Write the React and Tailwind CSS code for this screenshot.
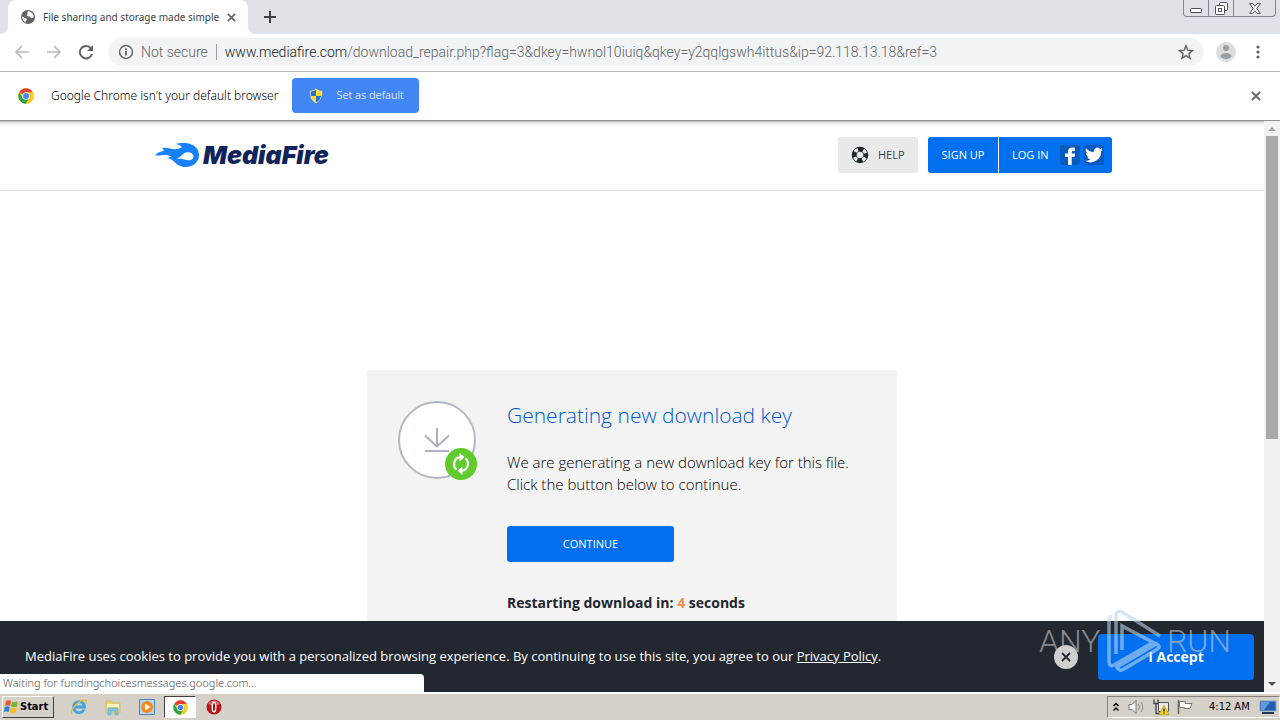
import React from 'react';

function ChromeLogo({ className }) {
  return (
    <svg viewBox="0 0 48 48" className={className} aria-hidden="true">
      <circle cx="24" cy="24" r="23" fill="#fbc91c" />
      <path d="M24 24 4.100 12.500A23 23 0 0 1 43.900 12.500H24Z" fill="#e33b2e" />
      <path d="M4.100 12.500A23 23 0 0 0 24 47L34 30 24 24 14 30Z" fill="#2ba24c" />
      <path d="M43.900 12.500A23 23 0 0 1 24 47L34 29 31 12.500Z" fill="#fbc91c" />
      <circle cx="24" cy="24" r="11.500" fill="#fff" />
      <circle cx="24" cy="24" r="8.800" fill="#4285f4" />
    </svg>
  );
}

function Shield({ className }) {
  return (
    <svg viewBox="0 0 16 16" className={className} aria-hidden="true">
      <path d="M8 .5C6 2 3.500 2.500 1.500 2.500 1.500 9 3 13 8 15.500 13 13 14.500 9 14.500 2.500 12.500 2.500 10 2 8 .5Z" fill="#e8eff5" stroke="#5b7486" strokeWidth=".6" />
      <path d="M8 1.800C6.500 2.800 4.500 3.400 2.700 3.500L2.900 8H8Z" fill="#2d6fc9" />
      <path d="M8 1.800C9.500 2.800 11.500 3.400 13.300 3.500L13.100 8H8Z" fill="#ffd935" />
      <path d="M2.900 8C3.500 11 5 13 8 14.400V8Z" fill="#ffd935" />
      <path d="M13.100 8C12.500 11 11 13 8 14.400V8Z" fill="#2d6fc9" />
    </svg>
  );
}

function Cross({ className }) {
  return (
    <svg viewBox="0 0 10 10" className={className} aria-hidden="true">
      <path d="m1 1 8 8M9 1 1 9" stroke="currentColor" strokeWidth="1.800" />
    </svg>
  );
}

function TabStrip() {
  return (
    <div className="flex h-[34px] items-stretch bg-[#dee1e6]">
      <div className="w-2 bg-white">
        <div className="h-full rounded-br-lg bg-[#dee1e6]" />
      </div>
      <div className="flex w-60 items-center rounded-t-lg bg-white pl-3">
        <svg viewBox="0 0 16 16" className="size-4 shrink-0" aria-hidden="true">
          <circle cx="8" cy="8" r="7" fill="#5f6368" />
          <path d="M2.500 7.500 5 9l1.500.5.3 1.500-1.300 1.200.2 1.300C3.500 12.600 2.200 10.500 2.300 8ZM8 2.300l-1 1.500 1 1-1.500 1.500L8 7.500h2l1 1.500 2-.3.7-.8C13.700 5 11 2.300 8 2.300Z" fill="#fff" />
        </svg>
        <span className="ml-[7px] flex-1 text-[10px] whitespace-nowrap text-[#3c4043]">File sharing and storage made simple</span>
        <button aria-label="Close tab" className="mr-3 text-[#5f6368]"><Cross className="size-[9px]" /></button>
      </div>
      <div className="w-2 bg-white">
        <div className="h-full rounded-bl-lg bg-[#dee1e6]" />
      </div>
      <button aria-label="New tab" className="ml-2 text-[#3c4043]">
        <svg viewBox="0 0 12 12" className="size-3" aria-hidden="true"><path d="M6 0v12M0 6h12" stroke="currentColor" strokeWidth="2" /></svg>
      </button>
      <div className="mr-1 ml-auto flex h-[17px] rounded-b border border-t-0 border-[#82878f] text-[#4c5157]">
        <button aria-label="Minimize" className="flex w-[25px] items-end justify-center border-r border-[#82878f] pb-[3px]">
          <svg viewBox="0 0 12 5" className="h-[5px] w-3" aria-hidden="true"><rect x=".5" y=".5" width="11" height="4" rx="1" fill="#fff" stroke="currentColor" /></svg>
        </button>
        <button aria-label="Restore" className="flex w-[25px] items-center justify-center border-r border-[#82878f]">
          <svg viewBox="0 0 13 13" className="size-[13px]" aria-hidden="true"><g fill="#fff" stroke="currentColor"><rect x="4.500" y=".5" width="8" height="8" rx="1" /><rect x=".5" y="3.500" width="9" height="9" rx="1" /><rect x="3.500" y="6.500" width="3" height="3" /></g></svg>
        </button>
        <button aria-label="Close window" className="flex w-[41px] items-center justify-center">
          <svg viewBox="0 0 12 11" className="h-[11px] w-3" aria-hidden="true"><path d="M.6.6h3.200L6 3.200 8.200.6h3.200L7.800 5.500l3.600 4.900H8.200L6 7.800l-2.200 2.600H.6l3.600-4.900Z" fill="#fff" stroke="currentColor" /></svg>
        </button>
      </div>
    </div>
  );
}

function Toolbar() {
  return (
    <div className="flex h-[38px] items-center border-b border-[#b6b8bb] bg-white px-3 pb-px font-['Roboto',sans-serif] text-[#5f6368]">
      <button aria-label="Back" className="text-[#b9bbbe]">
        <svg viewBox="0 0 20 20" className="size-5" aria-hidden="true"><path d="M17 10H4M10 4l-6 6 6 6" fill="none" stroke="currentColor" strokeWidth="1.700" /></svg>
      </button>
      <button aria-label="Forward" className="ml-3 text-[#b9bbbe]">
        <svg viewBox="0 0 20 20" className="size-5" aria-hidden="true"><path d="M3 10h13M10 4l6 6-6 6" fill="none" stroke="currentColor" strokeWidth="1.700" /></svg>
      </button>
      <button aria-label="Reload" className="ml-3">
        <svg viewBox="0 0 20 20" className="size-5" aria-hidden="true"><path d="M15 6.500A6.200 6.200 0 1 0 16 12" fill="none" stroke="currentColor" strokeWidth="2" /><path d="M17 3v6h-6Z" fill="currentColor" /></svg>
      </button>
      <div className="ml-3 flex h-7 min-w-0 flex-1 items-center rounded-full bg-[#f1f3f4] px-2.5">
        <svg viewBox="0 0 16 16" className="size-4 shrink-0" aria-hidden="true"><circle cx="8" cy="8" r="6.500" fill="none" stroke="currentColor" strokeWidth="1.400" /><path d="M8 7v4.500M8 4.300V6" stroke="currentColor" strokeWidth="1.700" /></svg>
        <span className="ml-[7px] text-[14px] font-light whitespace-nowrap">Not secure</span>
        <span className="mx-2 h-4 w-px bg-[#9aa0a6]" />
        <span className="flex-1 overflow-hidden text-[14px] font-light whitespace-nowrap text-[#5f6368]"><span className="text-[#202124]">www.mediafire.com</span>/download_repair.php?flag=3&amp;dkey=hwnol10iuiq&amp;qkey=y2qqlgswh4ittus&amp;ip=92.118.13.18&amp;ref=3</span>
        <button aria-label="Bookmark this page">
          <svg viewBox="0 0 16 16" className="size-4" aria-hidden="true"><path d="m8 1.800 1.800 4.300 4.700.4-3.600 3.100 1.100 4.600L8 11.700l-4 2.500 1.100-4.600L1.500 6.500l4.700-.4Z" fill="none" stroke="currentColor" strokeWidth="1.400" /></svg>
        </button>
      </div>
      <button aria-label="Profile" className="ml-3">
        <svg viewBox="0 0 20 20" className="size-5" aria-hidden="true"><circle cx="10" cy="10" r="10" fill="#dcdddf" /><circle cx="10" cy="6" r="3" fill="#9b9ea2" /><ellipse cx="10" cy="14" rx="5.500" ry="3" fill="#9b9ea2" /></svg>
      </button>
      <button aria-label="Menu" className="ml-3">
        <svg viewBox="0 0 20 20" className="size-5" aria-hidden="true"><circle cx="10" cy="5" r="1.600" fill="currentColor" /><circle cx="10" cy="10" r="1.600" fill="currentColor" /><circle cx="10" cy="15" r="1.600" fill="currentColor" /></svg>
      </button>
    </div>
  );
}

function DefaultBrowserBar() {
  return (
    <div className="flex h-[49px] items-center border-b border-[#929292] bg-white pr-[19px] pb-px pl-[18px]">
      <ChromeLogo className="size-4" />
      <span className="ml-[17px] text-[12px] font-light whitespace-nowrap text-black">Google Chrome isn't your default browser</span>
      <button className="ml-3.5 flex h-[35px] w-[127px] items-center rounded bg-[#4285f4] pl-4 text-[11px] font-light whitespace-nowrap text-white">
        <Shield className="mr-3 size-4" />Set as default
      </button>
      <button aria-label="Dismiss" className="ml-auto text-[#5f6368]"><Cross className="size-[10px]" /></button>
    </div>
  );
}

function SiteLogo() {
  return (
    <a href="#" aria-label="MediaFire" className="flex items-center gap-1 text-[#10245c]">
      <svg viewBox="0 0 44 25" className="h-[25px] w-11" aria-hidden="true">
        <path fillRule="evenodd" d="M0 12C3 9.500 5 8.500 8.500 8 9.500 7 7.500 5.500 7 5c5-1 9 1.500 13 1.200C23 6 25 5.500 27 4 25 2 22 1 20.500 1 25-.5 30-.5 33.500.5 40 2 44 6.500 44 12 44 19 38 24 31 24c-6 0-9-2.500-12-5.500-2-2-4-3-6-3 1-1.500 3-2 4-2-3-1.500-7-2-11-1.200C4 12.400 2 13 0 12Zm21 3.600c4-.8 5-3 7-4.700 2.500-2.200 7.500-2.300 9.500.2 2 2.500.5 5.600-2.800 6.100-4 .6-7-1.900-13.700-1.600Z" fill="#1681fb" />
      </svg>
      <span className="font-['Inter'] text-[25px] leading-[25px] font-black italic">MediaFire</span>
    </a>
  );
}

function SiteHeader() {
  return (
    <header className="flex h-[69px] shrink-0 items-center border-b border-[#e4e4e4] pb-0.5">
      <div className="mx-auto flex w-full max-w-[960px] items-center pl-[3px]">
        <SiteLogo />
        <a href="#help" className="ml-auto flex h-9 w-20 items-center rounded-[3px] bg-[#e9e9e9] pl-[13px] text-[11px] text-[#3b4048]">
          <svg viewBox="0 0 18 18" className="mr-[9px] size-[18px]" aria-hidden="true">
            <circle cx="9" cy="9" r="5.800" fill="none" stroke="#22262f" strokeWidth="5" />
            <circle cx="9" cy="9" r="5.800" fill="none" stroke="#e9e9e9" strokeWidth="3.400" strokeDasharray="3.600 5.510" strokeDashoffset="-2.750" />
          </svg>
          HELP
        </a>
        <a href="#signup" className="ml-2.5 flex h-9 w-[70px] items-center justify-center rounded-l-[3px] bg-[#0070f0] text-[11px] whitespace-nowrap text-white">SIGN UP</a>
        <a href="#login" className="ml-px flex h-9 w-[113px] items-center rounded-r-[3px] bg-[#0070f0] pl-[13px] text-[11px] whitespace-nowrap text-white">
          LOG IN
          <span className="ml-auto flex size-5 items-end justify-center rounded-[3px] bg-[#075bbd]">
            <svg viewBox="0 0 12 18" className="h-[18px] w-3" aria-hidden="true"><path d="M4 18V10H1V6.500h3V4.800C4 2 5.500.5 8.200.5H11v3.400H9.200C8 3.900 7.700 4.300 7.700 5.300v1.200H11L10.500 10H7.700v8Z" fill="#fff" /></svg>
          </span>
          <span className="mr-2 ml-1 flex size-5 items-center justify-center rounded-[3px] bg-[#075bbd]">
            <svg viewBox="0 0 24 24" className="size-[18px]" aria-hidden="true"><path d="M24 4.600a10 10 0 0 1-2.800.8 5 5 0 0 0 2.100-2.700 10 10 0 0 1-3.100 1.200 4.900 4.900 0 0 0-8.400 4.500A14 14 0 0 1 1.700 3.100a4.900 4.900 0 0 0 1.500 6.600 5 5 0 0 1-2.200-.6c0 2.300 1.600 4.400 3.900 4.900a5 5 0 0 1-2.200.1 4.900 4.900 0 0 0 4.600 3.400A9.900 9.900 0 0 1 0 19.500a14 14 0 0 0 21.500-12.400A10 10 0 0 0 24 4.600Z" fill="#fff" /></svg>
          </span>
        </a>
      </div>
    </header>
  );
}

function DownloadCard() {
  return (
    <section className="mx-auto mt-[179px] flex w-full max-w-[530px] grow items-start bg-[#f3f3f3] pt-[31px] pl-[31px] text-[#22262f]">
      <svg viewBox="0 0 80 80" className="size-20 shrink-0" aria-hidden="true">
        <circle cx="39" cy="39" r="38" fill="#fff" stroke="#b4b8c6" strokeWidth="2" />
        <path d="M39 27v18M27 34.500 39 45.500l12-11M27 50h24" fill="none" stroke="#acb0bf" strokeWidth="2" />
        <circle cx="63" cy="63" r="16" fill="#61cb2e" />
        <g fill="none" stroke="#fff" strokeWidth="2.200">
          <path d="M58.500 68.500a7 7 0 0 1 4-12.300M67.500 57.500a7 7 0 0 1-4 12.300" />
        </g>
        <path d="m61.500 52 5 4-5 4.500ZM64.500 65.500v8.500l-5-4.500Z" fill="#fff" />
      </svg>
      <div className="ml-[29px]">
        <h1 className="text-[21px] leading-[28px] font-light whitespace-nowrap text-[#0058d0]">Generating new download key</h1>
        <p className="mt-[22px] text-[15px] leading-[22px] font-light whitespace-nowrap text-black">We are generating a new download key for this file.<br />Click the button below to continue.</p>
        <button className="mt-[31px] h-9 w-[167px] rounded-[3px] bg-[#0070f0] text-[11px] text-white">CONTINUE</button>
        <p className="mt-[30px] text-[14px] leading-[22px] font-bold">Restarting download in: <span className="text-[#f68b4c]">4</span> seconds</p>
      </div>
    </section>
  );
}

function Watermark() {
  return (
    <div className="pointer-events-none absolute right-[33px] bottom-5 flex h-[62px] w-48 items-center justify-between font-['Roboto',sans-serif] text-[32px] leading-none font-light text-[#c9ccd1]/60">
      <span>ANY</span>
      <svg viewBox="0 0 56 62" className="h-[62px] w-14" aria-hidden="true">
        <path d="M3 53V10q0-4 3-3M10 44V5q0-5 6-3l38 24M16 40V16l36 19q3 2-2 5L18 59q-5 3-7-2l41-24M3 53q1 4 5 2L46 33" fill="none" stroke="#b9d4ee" strokeOpacity=".6" strokeWidth="3.500" />
      </svg>
      <span>RUN</span>
    </div>
  );
}

function CookieBar() {
  return (
    <div className="relative flex h-[71px] shrink-0 items-center bg-[#232730] pr-2.5 pl-[25px] text-white">
      <p className="text-[13px] whitespace-nowrap">MediaFire uses cookies to provide you with a personalized browsing experience. By continuing to use this site, you agree to our <a href="#privacy" className="underline">Privacy Policy</a>.</p>
      <button aria-label="Close" className="ml-auto flex size-6 items-center justify-center rounded-full bg-[#cfcfcf] text-[#22262f]"><Cross className="size-[10px]" /></button>
      <button className="ml-5 h-[46px] w-[156px] rounded bg-[#0070f0] text-[14px] font-bold">I Accept</button>
      <Watermark />
      <div className="absolute bottom-0 left-0 flex h-[18px] w-[424px] items-center rounded-tr bg-white pl-[3px] font-['Noto_Sans'] text-[11px] font-light text-[#4f5256]">Waiting for fundingchoicesmessages.google.com...</div>
    </div>
  );
}

function ScrollTrack() {
  return (
    <div className="flex w-4 flex-col items-center bg-[#f1f1f1]" aria-hidden="true">
      <svg viewBox="0 0 16 15" className="h-[15px] w-4"><path d="m4 10 4-4 4 4Z" fill="#a3a3a3" /></svg>
      <div className="h-[303px] w-3 bg-[#a8a8a8]" />
      <svg viewBox="0 0 16 16" className="mt-auto size-4"><path d="m4 6 4 4 4-4Z" fill="#505050" /></svg>
    </div>
  );
}

function Taskbar() {
  return (
    <div className="flex h-7 shrink-0 items-center border-t-2 border-white bg-[#d5d0c8] font-['DejaVu_Sans_Condensed','DejaVu_Sans',sans-serif]">
      <button className="ml-0.5 flex h-[22px] w-[52px] items-center border border-t-white border-r-[#404040] border-b-[#404040] border-l-white text-[11px] font-bold text-black">
        <svg viewBox="0 0 16 16" className="mr-px size-4 shrink-0" aria-hidden="true">
          <path d="M3 2q2.500-1.500 5 0L7 7Q4.500 5.500 2 7Z" fill="#e9562a" />
          <path d="M9 2.500q2.500 1.500 6 0L14 7.500q-3.500 1.500-6 0Z" fill="#79b52a" />
          <path d="M1.800 8Q4.300 6.500 6.800 8l-1 5Q3.300 11.500.8 13Z" fill="#2f7fd6" />
          <path d="M7.800 8.500q2.500 1.500 6 0l-1 5q-3.500 1.500-6 0Z" fill="#fbbb22" />
        </svg>
        Start
      </button>
      <div className="ml-2 flex items-center">
        <button aria-label="Internet Explorer" className="flex h-[22px] w-[34px] items-center justify-center">
          <svg viewBox="0 0 18 18" className="size-[18px]" aria-hidden="true"><path d="M14 11.500A5.500 5.500 0 1 1 14.500 9H5" fill="none" stroke="#3fa3e0" strokeWidth="2.800" /><path d="M2 16C-1 12 9 2 15 2c2 0 2 1.500 1 3.500" fill="none" stroke="#e9b93c" strokeWidth="1.300" /></svg>
        </button>
        <button aria-label="Explorer" className="flex h-[22px] w-[34px] items-center justify-center">
          <svg viewBox="0 0 18 18" className="size-[18px]" aria-hidden="true"><path d="M2 3h5l1 2h8v10H2Z" fill="#f0d576" stroke="#cdb052" strokeWidth=".6" /><path d="M3 6h12v3H3Z" fill="#fbf3c4" /><path d="M4 17v-6q0-1 1-1h8q1 0 1 1v6h-3v-4H7v4Z" fill="#7dc3ea" stroke="#559ecb" strokeWidth=".5" /></svg>
        </button>
        <button aria-label="Media Player" className="flex h-[22px] w-[34px] items-center justify-center">
          <svg viewBox="0 0 18 18" className="size-[18px]" aria-hidden="true"><path d="M1.500 1.500h15v15h-15Z" fill="#b5d7f3" stroke="#4b87bd" /><circle cx="9" cy="9" r="6" fill="#f58a18" /><path d="m7 5.500 5.500 3.500L7 12.500Z" fill="#fff" /></svg>
        </button>
        <button aria-label="Chrome" className="flex h-[22px] w-8 items-center justify-center border border-t-[#404040] border-r-white border-b-white border-l-[#404040] bg-white">
          <ChromeLogo className="size-[15px]" />
        </button>
        <button aria-label="Opera" className="flex h-[22px] w-9 items-center justify-center">
          <svg viewBox="0 0 16 16" className="size-4" aria-hidden="true"><circle cx="8" cy="8" r="7.500" fill="#b81619" /><path d="M2 5a7 7 0 0 1 12 0Q8 8 2 5Z" fill="#df6668" /><ellipse cx="8" cy="8" rx="1.800" ry="4.800" fill="#a11215" stroke="#fff" strokeWidth="1.400" /></svg>
        </button>
      </div>
      <div className="ml-auto flex h-[22px] w-[173px] items-center border border-t-[#85817a] border-r-white border-b-white border-l-[#85817a] pl-[3px]">
        <svg viewBox="0 0 10 12" className="h-3 w-2.5" aria-hidden="true"><path d="M2.500 5 5 2.500 7.500 5M2.500 9.500 5 7l2.500 2.500" fill="none" stroke="#000" strokeWidth="1.400" /></svg>
        <svg viewBox="0 0 18 16" className="ml-[7px] h-4 w-[18px]" aria-hidden="true"><path d="M1 5.500h3l4-4v13l-4-4H1Z" fill="#fff" stroke="#777" /><path d="M10.500 5q2 3 0 6M13 3q3.500 5 0 10" fill="none" stroke="#888" /></svg>
        <svg viewBox="0 0 18 18" className="ml-1.5 size-[18px]" aria-hidden="true"><path d="M6.500 4.500h10v9h-10Z" fill="#e8e8e8" stroke="#555" /><path d="M2 1.500v4h4v-4M4 5.500v10h5" fill="none" stroke="#444" strokeWidth="1.300" /><path d="m12 7.500 5 9H7Z" fill="#fcd51c" stroke="#a98b00" strokeWidth=".6" /><path d="M12 10.500v3M12 14.500v1" stroke="#000" strokeWidth="1.200" /></svg>
        <svg viewBox="0 0 18 16" className="ml-1.5 h-4 w-[18px]" aria-hidden="true"><path d="M2.500 1v14" stroke="#666" strokeWidth="1.600" /><path d="M3.500 2.500h6v2h6.500L14 9.500H8.500v-1h-5Z" fill="#fff" stroke="#777" /></svg>
        <span className="ml-[15px] flex-1 text-[11px] whitespace-nowrap text-black">4:12 AM</span>
        <svg viewBox="0 0 18 16" className="mr-0.5 h-4 w-[18px] shrink-0" aria-hidden="true"><path d="M1 2h16v10H1Z" fill="#1e5db2" stroke="#8fa3bb" /><path d="M2 3h9L5 11H2Z" fill="#5d9be0" /><path d="M3 13h12v2H3Z" fill="#20395a" /></svg>
      </div>
    </div>
  );
}

export default function App() {
  return (
    <div className="flex h-screen flex-col overflow-hidden bg-white font-['Noto_Sans',sans-serif]">
      <TabStrip />
      <Toolbar />
      <DefaultBrowserBar />
      <div className="flex min-h-0 flex-1">
        <main className="flex min-w-0 flex-1 flex-col border-t border-[#c4c4c4] bg-linear-to-b from-[#e4e4e4] to-white to-[4px] font-['Open_Sans',sans-serif]">
          <div className="flex min-h-0 flex-1 flex-col overflow-hidden">
            <SiteHeader />
            <DownloadCard />
          </div>
          <CookieBar />
        </main>
        <ScrollTrack />
      </div>
      <Taskbar />
    </div>
  );
}
